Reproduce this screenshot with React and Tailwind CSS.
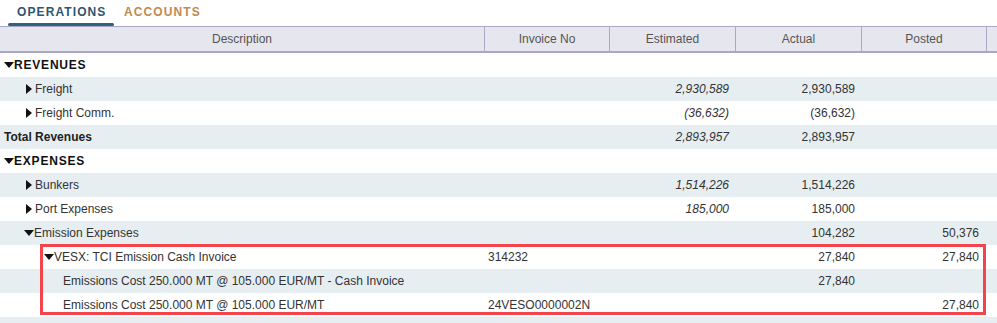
// Voyage P&L grid — operations tab
const cols = 'grid grid-cols-[484px_125px_126px_126px_125px_1fr]';

function Down() {
  return (
    <svg width="10" height="6" viewBox="0 0 10 6" className="inline-block shrink-0">
      <path d="M0 0 L10 0 L5 6 Z" fill="#111" />
    </svg>
  );
}

function Right() {
  return (
    <svg width="6" height="10" viewBox="0 0 6 10" className="inline-block shrink-0">
      <path d="M0 0 L6 5 L0 10 Z" fill="#111" />
    </svg>
  );
}

const rows = [
  { label: 'REVENUES', icon: 'down', pad: 'pl-[4px]', kind: 'section' },
  { label: 'Freight', icon: 'right', pad: 'pl-[26px]', est: '2,930,589', act: '2,930,589' },
  { label: 'Freight Comm.', icon: 'right', pad: 'pl-[26px]', est: '(36,632)', act: '(36,632)' },
  { label: 'Total Revenues', pad: 'pl-[4px]', kind: 'total', est: '2,893,957', act: '2,893,957' },
  { label: 'EXPENSES', icon: 'down', pad: 'pl-[4px]', kind: 'section' },
  { label: 'Bunkers', icon: 'right', pad: 'pl-[26px]', est: '1,514,226', act: '1,514,226' },
  { label: 'Port Expenses', icon: 'right', pad: 'pl-[26px]', est: '185,000', act: '185,000' },
  { label: 'Emission Expenses', icon: 'down', pad: 'pl-[24px]', act: '104,282', posted: '50,376' },
  { label: 'VESX: TCI Emission Cash Invoice', icon: 'down', pad: 'pl-[44px]', inv: '314232', act: '27,840', posted: '27,840' },
  { label: 'Emissions Cost 250.000 MT @ 105.000 EUR/MT - Cash Invoice', pad: 'pl-[63px]', act: '27,840' },
  { label: 'Emissions Cost 250.000 MT @ 105.000 EUR/MT', pad: 'pl-[63px]', inv: '24VESO0000002N', posted: '27,840' },
  { label: '', pad: '' },
];

export default function App() {
  return (
    <div className="w-[997px] h-[323px] overflow-hidden bg-white font-['Liberation_Sans',Arial,sans-serif] text-[12px] text-[#333]">
      {/* tabs */}
      <div className="flex h-[27px] border-b border-[#aaa6c6] pl-[8px]">
        <div className="relative w-[106px] pl-[9px] pt-[3px] text-[12px] font-bold tracking-[1.1px] text-[#2e5571]">
          OPERATIONS
          <div className="absolute left-0 right-0 top-[23px] h-[3px] rounded-[2px] bg-[#30627d]" />
        </div>
        <div className="pl-[10px] pt-[3px] text-[12px] font-bold tracking-[1.1px] text-[#c28a52]">ACCOUNTS</div>
      </div>

      {/* header */}
      <div className={`${cols} h-[26px] bg-[#e6e6ef] border-b-2 border-[#aaa6c6] text-[#555]`}>
        <div className="flex items-center justify-center">Description</div>
        <div className="flex items-center justify-center border-l border-[#aaa6c6]">Invoice No</div>
        <div className="flex items-center justify-center border-l border-[#aaa6c6]">Estimated</div>
        <div className="flex items-center justify-center border-l border-[#aaa6c6]">Actual</div>
        <div className="flex items-center justify-center border-l border-[#aaa6c6]">Posted</div>
        <div className="border-l border-[#aaa6c6]" />
      </div>

      {/* body */}
      <div className="relative">
        {rows.map((r, i) => (
          <div key={i} className={`${cols} h-[24px] ${i % 2 === 1 ? 'bg-[#e7eef1]' : 'bg-white'}`}>
            <div
              className={`flex items-center ${r.pad} ${
                r.kind === 'section'
                  ? 'font-bold tracking-[0.8px] text-[#111]'
                  : r.kind === 'total'
                  ? 'font-bold text-[#222]'
                  : ''
              }`}
            >
              {r.icon === 'down' && <Down />}
              {r.icon === 'right' && <Right />}
              <span className={r.icon === 'right' ? 'ml-[3px]' : ''}>{r.label}</span>
            </div>
            <div className="flex items-center pl-[4px]">{r.inv}</div>
            <div className="flex items-center justify-end pr-[6px] italic">{r.est}</div>
            <div className="flex items-center justify-end pr-[6px]">{r.act}</div>
            <div className="flex items-center justify-end pr-[7px]">{r.posted}</div>
            <div />
          </div>
        ))}

        {/* highlight annotation */}
        <div className="absolute left-[40px] top-[191px] w-[946px] h-[71px] border-[3px] border-[#f2444c] pointer-events-none" />
      </div>
    </div>
  );
}
